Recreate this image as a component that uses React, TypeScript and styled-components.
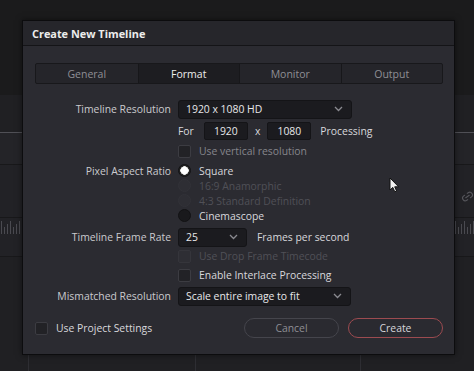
import React from "react";
import styled, { createGlobalStyle } from "styled-components";
import { Link2 } from "lucide-react";

const GlobalStyle = createGlobalStyle`
  html, body {
    margin: 0;
    padding: 0;
    background: #1b1b1c;
  }
  body {
    font-family: "Open Sans", "Liberation Sans", sans-serif;
    -webkit-font-smoothing: antialiased;
  }
`;

const tabs = ["General", "Format", "Monitor", "Output"];

function Chevron() {
  return (
    <svg width="9" height="6" viewBox="0 0 9 6">
      <path d="M1 1 L4.5 4.5 L8 1" fill="none" stroke="#8a8a90" strokeWidth="1.3" />
    </svg>
  );
}

function Waveform({ width }: { width: number }) {
  const bars = [];
  for (let x = 1; x < width; x += 3) {
    const h = 6 + ((x * 7) % 9);
    bars.push(<rect key={x} x={x} y={16 - h} width="1" height={h} fill="#4a4a50" />);
  }
  return (
    <svg width={width} height="16" viewBox={`0 0 ${width} 16`}>
      {bars}
    </svg>
  );
}

function App() {
  return (
    <Screen>
      <GlobalStyle />
      <Backdrop>
        <TopArea />
        <TrackBand h={31} light />
        <TrackBand h={52} />
        <WaveStrip>
          <Waveform width={22} />
          <Spacer />
          <Waveform width={20} />
        </WaveStrip>
        <TrackBand h={22} />
        <BottomArea>
          <Column w={28} />
          <Column w={167} />
          <Column w={165} />
          <Column w={114} last />
        </BottomArea>
      </Backdrop>
      <LinkIcon>
        <Link2 size={13} color="#55555b" strokeWidth={2} />
      </LinkIcon>

      <Dialog>
        <TitleBar>Create New Timeline</TitleBar>
        <Body>
          <Tabs>
            {tabs.map((t) => (
              <Tab key={t} active={t === "Format"}>
                {t}
              </Tab>
            ))}
          </Tabs>

          <Form>
            <Row h={20}>
              <Label>Timeline Resolution</Label>
              <Field>
                <Select w={174}>
                  <span>1920 x 1080 HD</span>
                  <Chevron />
                </Select>
              </Field>
            </Row>
            <Row h={20} mt={2}>
              <Label />
              <Field>
                <Text>For</Text>
                <NumBox style={{ marginLeft: 10 }}>1920</NumBox>
                <Text style={{ margin: "0 7px" }}>x</Text>
                <NumBox>1080</NumBox>
                <Text style={{ marginLeft: 9 }}>Processing</Text>
              </Field>
            </Row>
            <Row h={20}>
              <Label />
              <Field>
                <Check />
                <Text dim>Use vertical resolution</Text>
              </Field>
            </Row>
            <Row h={15} mt={2}>
              <Label>Pixel Aspect Ratio</Label>
              <Field>
                <Radio checked />
                <Text>Square</Text>
              </Field>
            </Row>
            <Row h={15}>
              <Label />
              <Field>
                <Radio disabled />
                <Text faint>16:9 Anamorphic</Text>
              </Field>
            </Row>
            <Row h={15}>
              <Label />
              <Field>
                <Radio disabled />
                <Text faint>4:3 Standard Definition</Text>
              </Field>
            </Row>
            <Row h={15}>
              <Label />
              <Field>
                <Radio />
                <Text>Cinemascope</Text>
              </Field>
            </Row>
            <Row h={20} mt={4}>
              <Label>Timeline Frame Rate</Label>
              <Field>
                <Select w={69}>
                  <span>25</span>
                  <Chevron />
                </Select>
                <Text style={{ marginLeft: 10 }}>Frames per second</Text>
              </Field>
            </Row>
            <Row h={18}>
              <Label />
              <Field>
                <Check disabled />
                <Text faint>Use Drop Frame Timecode</Text>
              </Field>
            </Row>
            <Row h={20}>
              <Label />
              <Field>
                <Check />
                <Text>Enable Interlace Processing</Text>
              </Field>
            </Row>
            <Row h={20} mt={1}>
              <Label>Mismatched Resolution</Label>
              <Field>
                <Select w={173}>
                  <span>Scale entire image to fit</span>
                  <Chevron />
                </Select>
              </Field>
            </Row>
          </Form>

          <Footer>
            <Check />
            <Text>Use Project Settings</Text>
            <Spacer />
            <Button>Cancel</Button>
            <Button primary>Create</Button>
          </Footer>
        </Body>
      </Dialog>

      <Cursor>
        <svg width="11" height="16" viewBox="0 0 11 16">
          <path
            d="M1 1 L1 13 L3.8 10.4 L5.8 14.8 L7.6 14 L5.7 9.8 L9.6 9.8 Z"
            fill="#f2f2f2"
            stroke="#111"
            strokeWidth="1"
            strokeLinejoin="round"
          />
        </svg>
      </Cursor>
    </Screen>
  );
}

const Screen = styled.div`
  position: relative;
  width: 474px;
  height: 371px;
  overflow: hidden;
  background: #1b1b1c;
`;

const Backdrop = styled.div`
  display: flex;
  flex-direction: column;
  height: 100%;
`;

const TopArea = styled.div`
  height: 132px;
  background: linear-gradient(#1b1b1c 0, #1b1b1c 95px, #202023 95px);
  border-bottom: 1px solid #505056;
`;

const TrackBand = styled.div<{ h: number; light?: boolean }>`
  height: ${(p) => p.h}px;
  background: ${(p) => (p.light ? "#242428" : "#222226")};
  border-bottom: 1px solid #18181a;
`;

const WaveStrip = styled.div`
  display: flex;
  height: 16px;
  background: #222226;
`;

const BottomArea = styled.div`
  flex: 1;
  display: flex;
  background: #202023;
`;

const Column = styled.div<{ w: number; last?: boolean }>`
  width: ${(p) => p.w}px;
  border-right: ${(p) => (p.last ? "none" : "1px solid #2e2e33")};
`;

const LinkIcon = styled.div`
  position: absolute;
  left: 461px;
  top: 190px;
  display: flex;
  transform: rotate(-35deg);
`;

const Dialog = styled.div`
  position: absolute;
  left: 22px;
  top: 20px;
  width: 431px;
  height: 333px;
  display: flex;
  flex-direction: column;
  background: #2b2b31;
  border: 1px solid #0c0c0e;
  box-shadow: 0 0 6px rgba(0, 0, 0, 0.5);
`;

const TitleBar = styled.div`
  height: 24px;
  display: flex;
  align-items: center;
  padding-left: 9px;
  background: #26262b;
  border-bottom: 1px solid #141417;
  color: #ececec;
  font-size: 10.9px;
  font-weight: 700;
`;

const Body = styled.div`
  flex: 1;
  display: flex;
  flex-direction: column;
  padding: 17px 11px 0 12px;
`;

const Tabs = styled.div`
  display: grid;
  grid-template-columns: repeat(4, 1fr);
  height: 21px;
  box-sizing: border-box;
  border: 1px solid #18181b;
  border-radius: 2px;
  background: #25252a;
  overflow: hidden;
`;

const Tab = styled.div<{ active?: boolean }>`
  display: flex;
  align-items: center;
  justify-content: center;
  font-size: 10.5px;
  color: ${(p) => (p.active ? "#ededed" : "#8f8f95")};
  background: ${(p) => (p.active ? "#1d1d21" : "transparent")};
  & + & {
    border-left: 1px solid #17171a;
  }
`;

const Form = styled.div`
  display: flex;
  flex-direction: column;
  margin-top: 15px;
`;

const Row = styled.div<{ h: number; mt?: number }>`
  display: grid;
  grid-template-columns: 136px 1fr;
  column-gap: 7px;
  align-items: center;
  height: ${(p) => p.h}px;
  margin-top: ${(p) => p.mt || 0}px;
`;

const Label = styled.div`
  text-align: right;
  font-size: 10.4px;
  color: #cacace;
  white-space: nowrap;
`;

const Field = styled.div`
  display: flex;
  align-items: center;
  height: 100%;
`;

const Text = styled.span<{ dim?: boolean; faint?: boolean }>`
  font-size: 10.4px;
  white-space: nowrap;
  color: ${(p) => (p.faint ? "#505057" : p.dim ? "#86868c" : "#d8d8dc")};
`;

const Select = styled.div<{ w: number }>`
  width: ${(p) => p.w}px;
  height: 19px;
  box-sizing: border-box;
  display: flex;
  align-items: center;
  justify-content: space-between;
  padding: 0 8px 0 7px;
  background: #1b1b1f;
  border: 1px solid #141417;
  border-radius: 3px;
  font-size: 10.4px;
  color: #e8e8ea;
`;

const NumBox = styled.div`
  width: 44px;
  height: 18px;
  box-sizing: border-box;
  display: flex;
  align-items: center;
  justify-content: center;
  background: #1b1b1f;
  border: 1px solid #141417;
  border-radius: 2px;
  font-size: 10.4px;
  color: #e8e8ea;
`;

const Check = styled.div<{ disabled?: boolean }>`
  width: 13px;
  height: 13px;
  box-sizing: border-box;
  margin-right: 8px;
  flex-shrink: 0;
  background: ${(p) => (p.disabled ? "#2e2e34" : "#222226")};
  border: 1px solid ${(p) => (p.disabled ? "#35353b" : "#3c3c42")};
  border-radius: 2px;
`;

const Radio = styled.div<{ checked?: boolean; disabled?: boolean }>`
  width: 13px;
  height: 13px;
  box-sizing: border-box;
  margin-right: 8px;
  flex-shrink: 0;
  border-radius: 50%;
  background: ${(p) =>
    p.checked
      ? "radial-gradient(circle, #ffffff 0 3.5px, #e8e8e8 3.5px 4px, #222 4.5px)"
      : p.disabled
      ? "#2e2e34"
      : "#19191c"};
  border: 1px solid ${(p) => (p.disabled ? "#323238" : "#121214")};
`;

const Footer = styled.div`
  display: flex;
  align-items: center;
  height: 20px;
  margin-top: 12px;
`;

const Spacer = styled.div`
  flex: 1;
`;

const Button = styled.div<{ primary?: boolean }>`
  width: 95px;
  height: 20px;
  box-sizing: border-box;
  display: flex;
  align-items: center;
  justify-content: center;
  margin-left: 9px;
  border-radius: 10px;
  font-size: 10.4px;
  color: ${(p) => (p.primary ? "#d6d6da" : "#8e8e94")};
  background: #2a2a30;
  border: 1px solid ${(p) => (p.primary ? "#9c4b50" : "#45454c")};
`;

const Cursor = styled.div`
  position: absolute;
  left: 389px;
  top: 177px;
  display: flex;
`;

export default App;
